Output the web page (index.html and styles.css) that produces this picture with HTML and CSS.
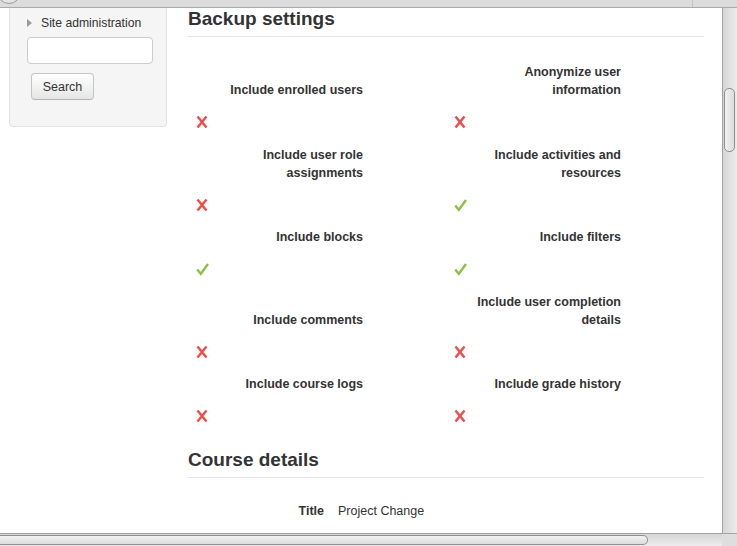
FILE: index.html
```html
<!DOCTYPE html>
<html lang="en">
<head>
  <meta charset="UTF-8" />
  <meta name="viewport" content="width=device-width, initial-scale=1.0" />
  <title>Backup settings</title>
  <link rel="stylesheet" href="styles.css">
</head>
<body>
  <div class="window">
    <!-- Browser top edge -->
    <div class="topbar">
      <span class="topbar-knob"></span>
      <span class="topbar-sep"></span>
    </div>

    <div class="frame">
      <div class="viewport">
        <div class="page">
          <!-- Left block: admin search -->
          <aside class="block">
            <div class="block-item"><span class="tree-arrow"></span>Site administration</div>
            <input type="text" class="block-input">
            <button class="block-button">Search</button>
          </aside>

          <!-- Main region -->
          <main class="content">
            <h3 class="section-title">Backup settings</h3>

            <div class="settings">
              <div class="setting-row">
                <div class="setting">
                  <div class="setting-label"><span>Include enrolled users</span></div>
                  <div class="setting-value"><svg class="icon-no" viewBox="0 0 12 14"><path d="M1.5 1.5 L10.5 12.5 M10.5 1.5 L1.5 12.5"/></svg></div>
                </div>
                <div class="setting">
                  <div class="setting-label"><span>Anonymize user information</span></div>
                  <div class="setting-value"><svg class="icon-no" viewBox="0 0 12 14"><path d="M1.5 1.5 L10.5 12.5 M10.5 1.5 L1.5 12.5"/></svg></div>
                </div>
              </div>

              <div class="setting-row">
                <div class="setting">
                  <div class="setting-label"><span>Include user role assignments</span></div>
                  <div class="setting-value"><svg class="icon-no" viewBox="0 0 12 14"><path d="M1.5 1.5 L10.5 12.5 M10.5 1.5 L1.5 12.5"/></svg></div>
                </div>
                <div class="setting">
                  <div class="setting-label"><span>Include activities and resources</span></div>
                  <div class="setting-value"><svg class="icon-yes" viewBox="0 0 13 14"><path d="M1.2 7.5 L4.8 11.8 L12 2"/></svg></div>
                </div>
              </div>

              <div class="setting-row">
                <div class="setting">
                  <div class="setting-label"><span>Include blocks</span></div>
                  <div class="setting-value"><svg class="icon-yes" viewBox="0 0 13 14"><path d="M1.2 7.5 L4.8 11.8 L12 2"/></svg></div>
                </div>
                <div class="setting">
                  <div class="setting-label"><span>Include filters</span></div>
                  <div class="setting-value"><svg class="icon-yes" viewBox="0 0 13 14"><path d="M1.2 7.5 L4.8 11.8 L12 2"/></svg></div>
                </div>
              </div>

              <div class="setting-row">
                <div class="setting">
                  <div class="setting-label"><span>Include comments</span></div>
                  <div class="setting-value"><svg class="icon-no" viewBox="0 0 12 14"><path d="M1.5 1.5 L10.5 12.5 M10.5 1.5 L1.5 12.5"/></svg></div>
                </div>
                <div class="setting">
                  <div class="setting-label"><span>Include user completion details</span></div>
                  <div class="setting-value"><svg class="icon-no" viewBox="0 0 12 14"><path d="M1.5 1.5 L10.5 12.5 M10.5 1.5 L1.5 12.5"/></svg></div>
                </div>
              </div>

              <div class="setting-row">
                <div class="setting">
                  <div class="setting-label"><span>Include course logs</span></div>
                  <div class="setting-value"><svg class="icon-no" viewBox="0 0 12 14"><path d="M1.5 1.5 L10.5 12.5 M10.5 1.5 L1.5 12.5"/></svg></div>
                </div>
                <div class="setting">
                  <div class="setting-label"><span>Include grade history</span></div>
                  <div class="setting-value"><svg class="icon-no" viewBox="0 0 12 14"><path d="M1.5 1.5 L10.5 12.5 M10.5 1.5 L1.5 12.5"/></svg></div>
                </div>
              </div>
            </div>

            <h3 class="section-title">Course details</h3>
            <div class="detail-row">
              <span class="detail-label">Title</span>
              <span class="detail-value">Project Change</span>
            </div>
          </main>
        </div>
      </div>

      <!-- Vertical scrollbar -->
      <div class="vscroll"><div class="vscroll-thumb"></div></div>
    </div>

    <!-- Horizontal scrollbar -->
    <div class="hscroll">
      <div class="hscroll-track"><div class="hscroll-thumb"></div></div>
      <div class="hscroll-corner"></div>
    </div>
  </div>
</body>
</html>
```

FILE: styles.css
```css
/* Reset and base styles */
* {
  padding: 0;
  margin: 0;
  box-sizing: border-box;
}

body {
  background-color: #fff;
  color: #333;
  font-family: "Liberation Sans", Arial, sans-serif;
  font-size: 12.5px;
  line-height: 18px;
  overflow: hidden;
}

.window {
  display: flex;
  flex-direction: column;
  width: 737px;
  height: 546px;
}

/* Browser top edge */
.topbar {
  height: 8px;
  background-color: #dcdcdc;
  border-bottom: 1px solid #a9a9a9;
  display: flex;
  overflow: hidden;
}

.topbar-knob {
  width: 24px;
  height: 24px;
  margin: -20px 0 0 -3px;
  border: 1px solid #9a9a9a;
  border-radius: 50%;
  background-color: #e4e4e4;
}

.topbar-sep {
  width: 1px;
  margin-left: 671px;
  background-color: #c4c4c4;
}

.frame {
  flex: 1;
  display: flex;
  min-height: 0;
}

.viewport {
  flex: 1;
  overflow: hidden;
}

.page {
  display: flex;
  padding-left: 9px;
}

/* Left block */
.block {
  width: 158px;
  height: 119px;
  background-color: #f5f5f5;
  border: 1px solid #e3e3e3;
  border-top: none;
  border-radius: 0 0 4px 4px;
  padding: 6px 0 0 17px;
  display: flex;
  flex-direction: column;
  align-items: flex-start;
}

.block-item {
  display: flex;
  align-items: center;
  font-size: 12.2px;
  color: #333;
}

.tree-arrow {
  width: 0;
  height: 0;
  border-left: 5px solid #9a9a9a;
  border-top: 4.5px solid transparent;
  border-bottom: 4.5px solid transparent;
  margin-right: 9px;
}

.block-input {
  width: 126px;
  height: 27px;
  margin-top: 5px;
  border: 1px solid #ccc;
  border-radius: 4px;
  background-color: #fff;
}

.block-button {
  width: 63px;
  height: 27px;
  margin: 9px 0 0 4px;
  border: 1px solid #c5c5c5;
  border-bottom-color: #b3b3b3;
  border-radius: 4px;
  background: linear-gradient(#ffffff, #e6e6e6);
  font-family: "Liberation Sans", Arial, sans-serif;
  font-size: 12.5px;
  color: #333;
}

/* Main region */
.content {
  width: 516px;
  margin-left: 21px;
}

.section-title {
  font-size: 19px;
  line-height: 21px;
  font-weight: bold;
  color: #333;
  padding-bottom: 7px;
  border-bottom: 1px solid #e5e5e5;
}

.settings {
  margin-top: 26px;
  margin-bottom: 9px;
}

.setting-row {
  display: flex;
}

.setting {
  width: 258px;
  display: flex;
  flex-direction: column;
}

.setting-label {
  flex: 1;
  width: 175px;
  padding-left: 20px;
  display: flex;
  align-items: flex-end;
  justify-content: flex-end;
  text-align: right;
  font-weight: bold;
}

.setting-value {
  padding: 16px 0 16.5px 8px;
  height: 46.5px;
}

.setting-value svg {
  display: block;
  height: 14px;
}

.icon-no {
  width: 12px;
}

.icon-no path {
  fill: none;
  stroke: #f24a4a;
  stroke-width: 2.4;
}

.icon-yes {
  width: 13px;
}

.icon-yes path {
  fill: none;
  stroke: #89c23f;
  stroke-width: 2.3;
}

.detail-row {
  display: flex;
  margin-top: 24px;
}

.detail-label {
  width: 136px;
  text-align: right;
  font-weight: bold;
}

.detail-value {
  margin-left: 14px;
}

/* Scrollbars */
.vscroll {
  width: 15px;
  background: linear-gradient(to right, #d6d6d6, #ececec);
  border-left: 1px solid #a3a3a3;
  padding: 80px 0 0 1px;
}

.vscroll-thumb {
  width: 11px;
  height: 64px;
  border: 1px solid #8f8f8f;
  border-radius: 5px;
  background: linear-gradient(to right, #f2f2f2, #dcdcdc);
}

.hscroll {
  height: 13px;
  display: flex;
  border-top: 1px solid #a3a3a3;
}

.hscroll-track {
  flex: 1;
  background: linear-gradient(#d6d6d6, #ececec);
  padding-top: 1px;
}

.hscroll-thumb {
  width: 648px;
  height: 10px;
  border: 1px solid #8f8f8f;
  border-left: none;
  border-radius: 0 5px 5px 0;
  background: linear-gradient(#f2f2f2, #dcdcdc);
}

.hscroll-corner {
  width: 15px;
  background-color: #dedede;
}
```
